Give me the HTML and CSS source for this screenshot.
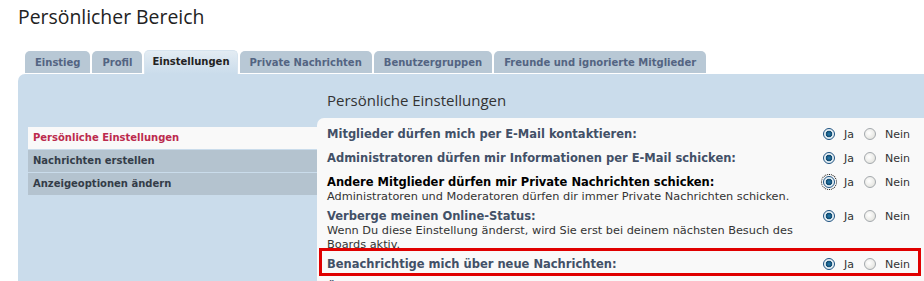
FILE: index.html
```html
<!DOCTYPE html>
<html lang="de">
<head>
  <meta charset="utf-8">
  <title>Persönlicher Bereich</title>
  <link rel="stylesheet" href="styles.css">
</head>
<body>
  <h1 class="page-title">Persönlicher Bereich</h1>

  <ul class="tabs">
    <li class="tab">Einstieg</li>
    <li class="tab">Profil</li>
    <li class="tab active">Einstellungen</li>
    <li class="tab">Private Nachrichten</li>
    <li class="tab">Benutzergruppen</li>
    <li class="tab">Freunde und ignorierte Mitglieder</li>
  </ul>

  <div class="panel">
    <ul class="side-menu">
      <li class="menu-item current">Persönliche Einstellungen</li>
      <li class="menu-item">Nachrichten erstellen</li>
      <li class="menu-item">Anzeigeoptionen ändern</li>
    </ul>

    <div class="main">
      <h2 class="main-title">Persönliche Einstellungen</h2>

      <div class="settings">
        <div class="row">
          <div class="label">
            <b>Mitglieder dürfen mich per E-Mail kontaktieren:</b>
          </div>
          <div class="choice">
            <span class="radio checked"></span><span class="opt">Ja</span>
            <span class="radio"></span><span class="opt">Nein</span>
          </div>
        </div>

        <div class="row">
          <div class="label">
            <b>Administratoren dürfen mir Informationen per E-Mail schicken:</b>
          </div>
          <div class="choice">
            <span class="radio checked"></span><span class="opt">Ja</span>
            <span class="radio"></span><span class="opt">Nein</span>
          </div>
        </div>

        <div class="row">
          <div class="label">
            <b class="strong">Andere Mitglieder dürfen mir Private Nachrichten schicken:</b>
            <span class="desc">Administratoren und Moderatoren dürfen dir immer Private Nachrichten schicken.</span>
          </div>
          <div class="choice">
            <span class="radio checked focus"></span><span class="opt">Ja</span>
            <span class="radio"></span><span class="opt">Nein</span>
          </div>
        </div>

        <div class="row">
          <div class="label">
            <b>Verberge meinen Online-Status:</b>
            <span class="desc">Wenn Du diese Einstellung änderst, wird Sie erst bei deinem nächsten Besuch des Boards aktiv.</span>
          </div>
          <div class="choice">
            <span class="radio checked"></span><span class="opt">Ja</span>
            <span class="radio"></span><span class="opt">Nein</span>
          </div>
        </div>

        <div class="row marked">
          <div class="label">
            <b>Benachrichtige mich über neue Nachrichten:</b>
          </div>
          <div class="choice">
            <span class="radio checked"></span><span class="opt">Ja</span>
            <span class="radio"></span><span class="opt">Nein</span>
          </div>
        </div>

        <div class="row">
          <div class="label">
            <b>Über neue Private Nachrichten per Pop-up informieren:</b>
          </div>
          <div class="choice">
            <span class="radio checked"></span><span class="opt">Ja</span>
            <span class="radio"></span><span class="opt">Nein</span>
          </div>
        </div>
      </div>
    </div>
  </div>
</body>
</html>
```

FILE: styles.css
```css
*{
  margin:0;
  padding:0;
  box-sizing:border-box;
}

body{
  background:white;
  font-family:"DejaVu Sans", Verdana, sans-serif;
  font-size:11px;
  color:#333;
  overflow:hidden;
}

.page-title{
  font-family:"Open Sans", sans-serif;
  font-weight:normal;
  font-size:19.4px;
  color:#222;
  line-height:26px;
  padding:4px 0 0 18px;
}

/* tabs */
.tabs{
  list-style:none;
  display:flex;
  gap:2px;
  margin:21px 0 0 25px;
  height:23px;
}

.tab{
  background:#b8c8d5;
  color:#536482;
  font-weight:bold;
  font-size:10px;
  padding:0 10px;
  line-height:23px;
  border-radius:5px 5px 0 0;
  height:22px;
}

.tab.active{
  background:linear-gradient(#e3ecf3, #cadceb);
  color:#222;
  height:24px;
  padding:0 7px;
  border:1px solid #d6e3ee;
  border-bottom:none;
  line-height:22px;
  margin-top:-1px;
}

/* panel */
.panel{
  margin-left:18px;
  background:#cadceb;
  border-radius:7px 0 0 0;
  display:flex;
  padding-left:10px;
  height:220px;
}

.side-menu{
  list-style:none;
  width:289px;
  margin-top:53px;
}

.menu-item{
  background:#b4c3cf;
  color:#333c48;
  font-weight:bold;
  font-size:10px;
  height:22px;
  line-height:22px;
  padding-left:5px;
  margin-bottom:1px;
}

.menu-item.current{
  background:#f9f9f9;
  color:#bc2a4d;
}

.main{
  flex:1;
}

.main-title{
  font-family:"Open Sans", sans-serif;
  font-weight:normal;
  font-size:15px;
  color:#333;
  height:44px;
  line-height:20px;
  padding:16px 0 0 10px;
}

.settings{
  background:#f9f9f9;
  border-radius:7px 0 0 0;
  padding:7px 14px 0 10px;
  height:200px;
}

.row{
  display:flex;
  justify-content:space-between;
  align-items:flex-start;
  margin-bottom:3px;
}

/* red highlight box around the pm notification row */
.row.marked{
  outline:3px solid #e00000;
  margin:-4px -8px 6px -5px;
  padding:4px 8px 0 5px;
}

.row.marked .choice{
  margin-bottom:0;
}

.label{
  padding-top:2px;
  padding-right:20px;
}

.label b{
  display:block;
  font-size:11.5px;
  line-height:15px;
  color:#425067;
}

.label b.strong{
  color:#000;
}

.desc{
  display:block;
  font-size:11.3px;
  line-height:14px;
  color:#333;
}

.choice{
  display:flex;
  align-items:center;
  height:18px;
  margin-bottom:3px;
  flex-shrink:0;
}

.opt{
  margin:0 10px 0 9px;
}

.opt:last-child{
  margin-right:0;
}

.radio{
  width:12px;
  height:12px;
  border-radius:50%;
  border:1px solid #a4a9ad;
  background:radial-gradient(circle at 40% 40%, #fff, #dcdcd6);
}

.radio.checked{
  border-color:#1c5180;
  background:radial-gradient(circle at 50% 50%, #2a7fb0 0, #10486e 3px, #dbe8ef 3.6px, #fff 6px);
}

.radio.focus{
  outline:1px dotted #000;
  outline-offset:1px;
}
```
